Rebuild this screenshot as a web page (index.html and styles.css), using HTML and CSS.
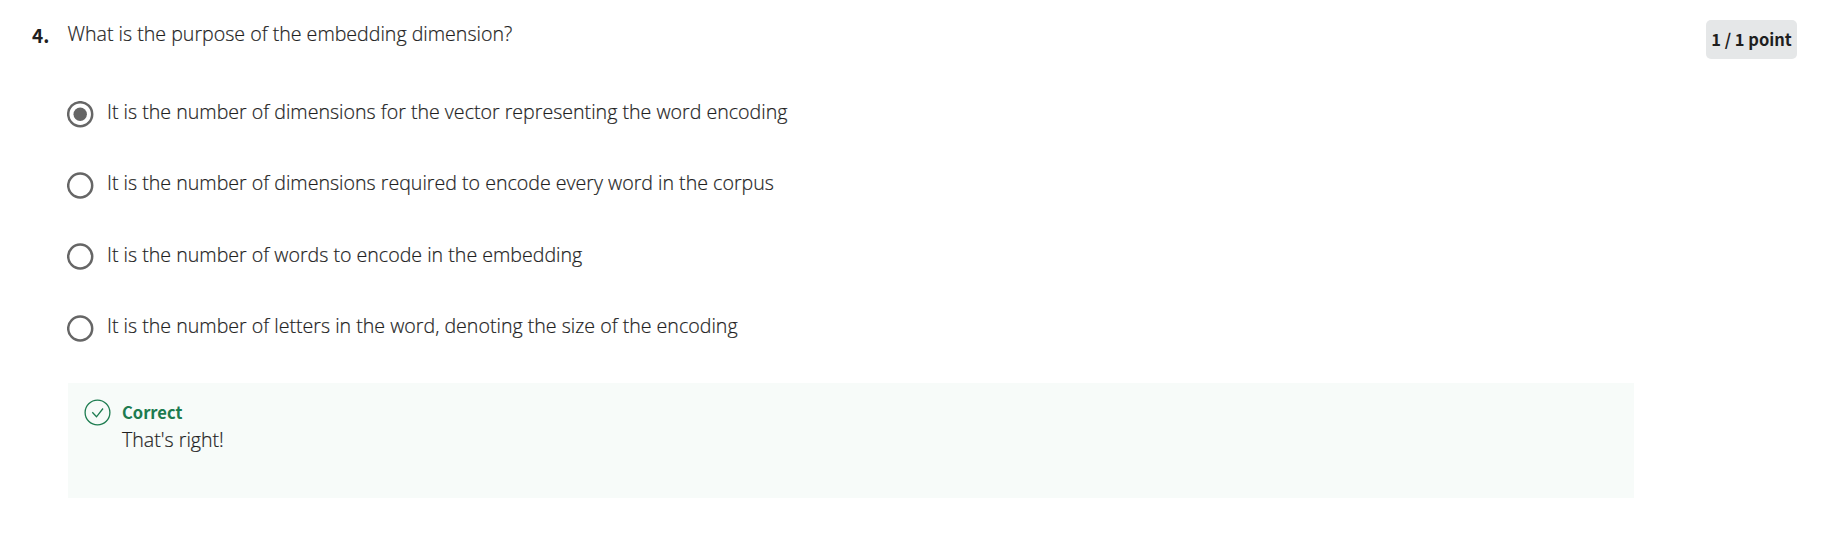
FILE: index.html
```html
<!DOCTYPE html>
<html lang="en">
<head>
<meta charset="utf-8">
<title>Quiz question</title>
<link rel="stylesheet" href="styles.css">
</head>
<body>
<main class="question">
  <div class="number">4.</div>
  <div class="body">
    <p class="prompt">What is the purpose of the embedding dimension?</p>
    <div class="options">
      <div class="option"><svg class="radio" viewBox="0 0 27 27"><circle class="ring" cx="13.200" cy="13.200" r="12"/><circle class="dot" cx="13.200" cy="13.200" r="6.700"/></svg><span>It is the number of dimensions for the vector representing the word encoding</span></div>
      <div class="option"><svg class="radio" viewBox="0 0 27 27"><circle class="ring" cx="13.200" cy="13.500" r="12"/></svg><span>It is the number of dimensions required to encode every word in the corpus</span></div>
      <div class="option"><svg class="radio" viewBox="0 0 27 27"><circle class="ring" cx="13.200" cy="13.500" r="12"/></svg><span>It is the number of words to encode in the embedding</span></div>
      <div class="option"><svg class="radio" viewBox="0 0 27 27"><circle class="ring" cx="13.200" cy="13.500" r="12"/></svg><span>It is the number of letters in the word, denoting the size of the encoding</span></div>
    </div>
    <div class="feedback">
      <svg class="check" width="28" height="28" viewBox="0 0 28 28" fill="none" stroke="#1d7c50" stroke-width="1.3"><circle cx="13.500" cy="14.500" r="12.4"/><path d="M8.300 14.200l4.200 4.600 6.500-8.300"/></svg>
      <div><div class="verdict">Correct</div><div class="message">That's right!</div></div>
    </div>
  </div>
  <div class="points">1 / 1 point</div>
</main>
</body>
</html>
```
FILE: styles.css
```css
body { margin: 0; background: #fff; color: #1f1f1f; font-family: "Open Sans", sans-serif; font-size: 19.600px; }
.question { display: flex; align-items: flex-start; padding: 20px 32px 0; }
.number { width: 35.500px; flex: none; font: 700 19px/30px "Noto Sans CJK SC", "Noto Sans", sans-serif; }
.body { width: 1566px; flex: none; }
.prompt, .options, .message { font-weight: 300; -webkit-text-stroke: 0.200px #1f1f1f; }
.prompt { margin: 0; line-height: 28px; }
.options { display: flex; flex-direction: column; gap: 43.400px; padding-top: 50px; }
.option { display: flex; gap: 13.500px; line-height: 27px; height: 28px; }
.radio { flex: none; width: 27px; height: 27px; margin: 2.600px 0 0 -1px; }
.ring { fill: none; stroke: #666; stroke-width: 2.500px; }
.dot { fill: #666; }
.feedback { display: flex; gap: 10.500px; box-sizing: border-box; height: 115px; margin-top: 43px; padding: 15px 16px; background: #f7fbf9; }
.check { flex: none; }
.verdict { color: #1d7c50; font: 700 16.500px/28px "Noto Sans CJK SC", "Noto Sans", sans-serif; }
.message { line-height: 28px; }
.points { margin-left: auto; width: 91px; height: 39px; border-radius: 5px; background: #e5e7e8; font: 700 16.500px/38px "Noto Sans CJK SC", "Noto Sans", sans-serif; text-align: center; white-space: nowrap; }
```
